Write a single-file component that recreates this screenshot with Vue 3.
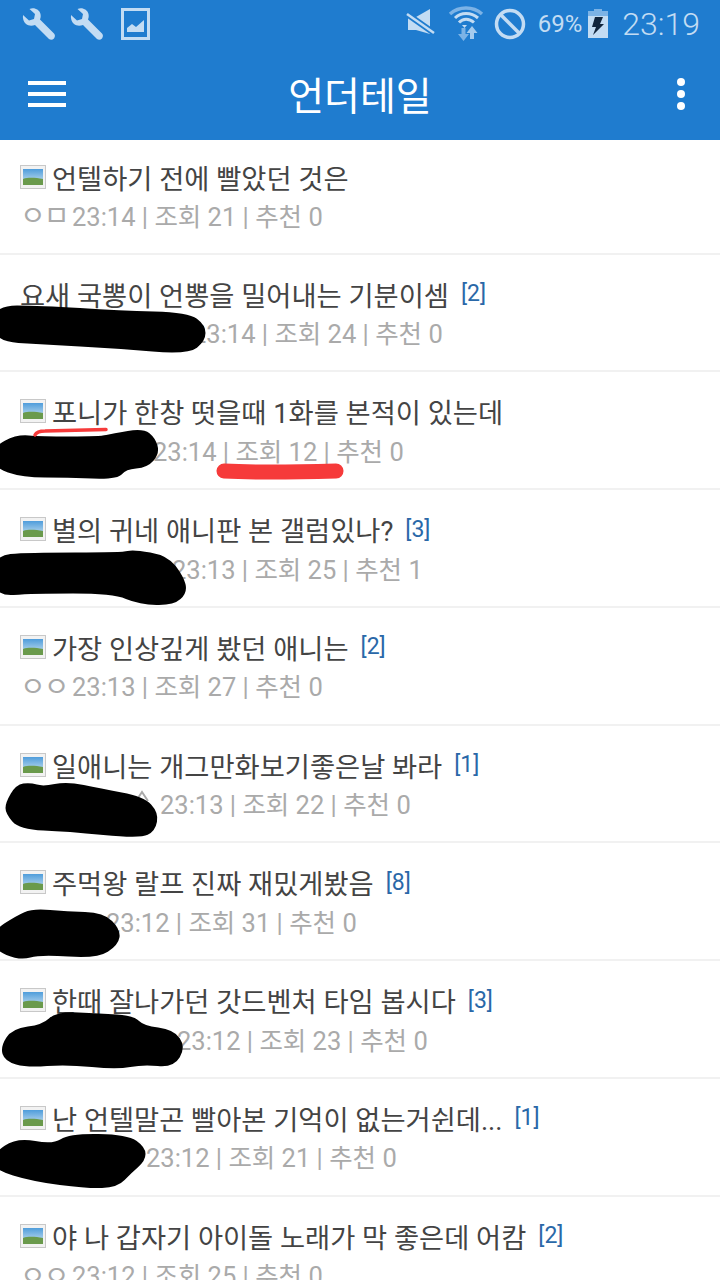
<template>
  <div class="page">
    <div class="statusbar">
      <div class="status-left">
        <svg v-for="n in 2" :key="n" viewBox="0 0 36 36" width="36" height="36">
          <path d="M3 9 L9 14.5 L14 13 L15 8 L9.5 3 C14 1 19.5 3.5 20.5 8 C21 10.5 20.5 12 20 13.5 L34 27.5 C35.5 29 35 31 34 32.5 C32.5 34 30.5 34 29 33 L15 19 C12 20 8.5 20 6 18 C3.5 16 2.5 12.5 3 9 Z" fill="#c3dcf3" />
        </svg>
        <svg class="picture" viewBox="0 0 30 32" width="30" height="32">
          <rect x="2.5" y="1.5" width="26" height="29" fill="none" stroke="#c3dcf3" stroke-width="3" />
          <path d="M7 24 V20 L12 16 L16 19 L24 12 V24 Z" fill="#c3dcf3" />
        </svg>
      </div>
      <div class="status-right">
        <svg viewBox="0 0 32 32" width="32" height="32">
          <path d="M3 9 H11 L25 1 V26 L11 22 H3 Z" fill="#c3dcf3" />
          <path d="M2 6 L29 25" stroke="#1f7ccf" stroke-width="6" />
          <path d="M2 6 L29 25" stroke="#c3dcf3" stroke-width="2.5" />
        </svg>
        <svg class="wifi" viewBox="0 0 36 36" width="36" height="36">
          <path d="M2 8 C11 0 25 0 34 8" fill="none" stroke="#7cb3e6" stroke-width="3.5" />
          <path d="M7 12 C13 6 23 6 30 12" fill="none" stroke="#c3dcf3" stroke-width="3" />
          <path d="M11 16.5 C15 12 21 12 26 16.5" fill="none" stroke="#c3dcf3" stroke-width="3" />
          <path d="M14 19 H19 L16.5 22 Z" fill="#c3dcf3" />
          <path d="M13.5 22 h4 v6 h3.5 l-5.5 7 l-5.5 -7 h3.5 z" fill="#7cb3e6" />
          <path d="M22 33 h4 v-6 h3.5 l-5.5 -7 l-5.5 7 h3.5 z" fill="#a5cbee" />
        </svg>
        <svg viewBox="0 0 32 32" width="32" height="32">
          <circle cx="16" cy="16" r="13.5" fill="none" stroke="#c3dcf3" stroke-width="3.5" />
          <path d="M6.5 6.5 L25.5 25.5" stroke="#c3dcf3" stroke-width="3.5" />
        </svg>
        <span class="battery-text">69%</span>
        <svg class="battery" viewBox="0 0 20 30" width="20" height="30">
          <rect x="6" y="0" width="8" height="2" fill="#7cb3e6" />
          <rect x="0" y="2" width="20" height="5" fill="#7cb3e6" />
          <rect x="0" y="7" width="20" height="22" fill="#c3dcf3" />
          <path d="M7 8 H15 L12 15 H16 L5 26 L8 18 H4 Z" fill="#11253d" />
        </svg>
        <span class="clock">23:19</span>
      </div>
    </div>

    <header class="appbar">
      <div class="hamburger"><i></i><i></i><i></i></div>
      <h1>언더테일</h1>
      <div class="dots"><i></i><i></i><i></i></div>
    </header>

    <ul class="list">
      <li v-for="item in items" :key="item.title" class="row">
        <div class="title">
          <svg v-if="item.image" class="thumb" viewBox="0 0 26 24" width="26" height="24">
            <defs>
              <linearGradient id="sky" x1="0" y1="0" x2="0" y2="1">
                <stop offset="0" stop-color="#4f9ddb" />
                <stop offset="1" stop-color="#d2e6f2" />
              </linearGradient>
            </defs>
            <rect x="0.5" y="0.5" width="25" height="23" fill="#f2f2f2" stroke="#c8c8c8" />
            <rect x="3" y="4" width="20" height="16" fill="url(#sky)" />
            <path d="M3 14 C9 12 16 13 23 14 V20 H3 Z" fill="#6a9a4c" />
          </svg>
          <span>{{ item.title }}</span>
          <span v-if="item.count" class="count">[{{ item.count }}]</span>
        </div>
        <div class="meta">
          <span class="nick" :style="{ width: item.nickWidth + 'px' }">{{ item.nick }}</span>
          <span>{{ item.time }} | 조회 {{ item.views }} | 추천 {{ item.likes }}</span>
        </div>
      </li>
    </ul>

    <svg class="scribbles" viewBox="0 0 720 1280" width="720" height="1280">
      <path d="M136 801 L142 792 L148 801" fill="none" stroke="#aaa" stroke-width="2" />
      <path v-for="(blob, i) in blobs" :key="i" :d="smooth(blob)" fill="#000" stroke="#000" stroke-width="3" stroke-linejoin="round" />
      <g fill="none" stroke="#f63a3a" stroke-linecap="round">
        <path d="M35 435 Q37 431 45 431 L106 429.5" stroke-width="3.5" />
        <path d="M224 471 C260 473 300 472 336 471" stroke-width="15" />
      </g>
    </svg>
  </div>
</template>

<script setup>
const items = [
  { title: "언텔하기 전에 빨았던 것은", image: true, nick: "ㅇㅁ", nickWidth: 52, time: "23:14", views: 21, likes: 0 },
  { title: "요새 국뽕이 언뽕을 밀어내는 기분이셈", count: 2, nick: "", nickWidth: 172, time: "23:14", views: 24, likes: 0 },
  { title: "포니가 한창 떳을때 1화를 본적이 있는데", image: true, nick: "", nickWidth: 133, time: "23:14", views: 12, likes: 0 },
  { title: "별의 귀네 애니판 본 갤럼있나?", image: true, count: 3, nick: "", nickWidth: 152, time: "23:13", views: 25, likes: 1 },
  { title: "가장 인상깊게 봤던 애니는", image: true, count: 2, nick: "ㅇㅇ", nickWidth: 52, time: "23:13", views: 27, likes: 0 },
  { title: "일애니는 개그만화보기좋은날 봐라", image: true, count: 1, nick: "", nickWidth: 140, time: "23:13", views: 22, likes: 0 },
  { title: "주먹왕 랄프 진짜 재밌게봤음", image: true, count: 8, nick: "", nickWidth: 86, time: "23:12", views: 31, likes: 0 },
  { title: "한때 잘나가던 갓드벤처 타임 봅시다", image: true, count: 3, nick: "", nickWidth: 157, time: "23:12", views: 23, likes: 0 },
  { title: "난 언텔말곤 빨아본 기억이 없는거쉰데...", image: true, count: 1, nick: "", nickWidth: 126, time: "23:12", views: 21, likes: 0 },
  { title: "야 나 갑자기 아이돌 노래가 막 좋은데 어캄", image: true, count: 2, nick: "ㅇㅇ", nickWidth: 52, time: "23:12", views: 25, likes: 0 },
];

// 닉네임 가린 낙서 외곽선
const blobs = [
  [[-6, 307], [40, 307], [120, 312], [188, 314], [204, 326], [204, 340], [188, 353], [117, 347], [43, 343], [-6, 340]],
  [[-6, 448], [17, 436], [40, 438], [100, 438], [113, 435], [143, 430], [154, 439], [158, 453], [147, 466], [125, 468], [117, 478], [67, 476], [23, 476], [-6, 466]],
  [[-6, 557], [27, 554], [123, 554], [133, 551], [167, 557], [182, 577], [186, 592], [173, 604], [140, 603], [113, 592], [33, 592], [-6, 595]],
  [[7, 803], [17, 786], [30, 784], [43, 788], [67, 783], [100, 790], [143, 798], [157, 813], [154, 830], [140, 837], [67, 830], [20, 828], [7, 813]],
  [[-6, 932], [17, 917], [33, 910], [67, 913], [103, 914], [119, 930], [117, 944], [97, 957], [40, 953], [20, 959], [-6, 948]],
  [[2, 1047], [13, 1030], [43, 1026], [57, 1013], [100, 1015], [133, 1017], [143, 1027], [173, 1031], [184, 1047], [173, 1066], [143, 1063], [117, 1068], [67, 1063], [27, 1066], [6, 1060]],
  [[-6, 1155], [17, 1139], [53, 1146], [70, 1135], [127, 1136], [144, 1148], [144, 1160], [130, 1172], [117, 1186], [87, 1187], [33, 1180], [-6, 1168]],
];

// 점들을 이어 둥근 닫힌 곡선으로
const smooth = (pts) => {
  const mid = (a, b) => [(a[0] + b[0]) / 2, (a[1] + b[1]) / 2];
  const start = mid(pts[pts.length - 1], pts[0]);
  let d = `M${start[0]} ${start[1]}`;
  pts.forEach((p, i) => {
    const m = mid(p, pts[(i + 1) % pts.length]);
    d += ` Q${p[0]} ${p[1]} ${m[0]} ${m[1]}`;
  });
  return d + " Z";
};
</script>

<style scoped>
.page {
  position: relative;
  width: 720px;
  height: 1280px;
  overflow: hidden;
  background: #fff;
  font-family: Roboto, "Noto Sans CJK KR", sans-serif;
}

.statusbar {
  display: flex;
  justify-content: space-between;
  align-items: center;
  height: 56px;
  padding: 0 20px 8px 20px;
  box-sizing: border-box;
  background: #1f7ccf;
  color: #c3dcf3;
}

.status-left,
.status-right {
  display: flex;
  align-items: center;
}

.status-left {
  gap: 12px;
}

.picture {
  margin-left: 4px;
}

.status-right {
  gap: 10px;
}

.wifi {
  margin-left: 1px;
}

.battery-text {
  font-size: 24px;
  margin-left: 2px;
  margin-right: -4px;
}

.clock {
  font-size: 32px;
  font-weight: 300;
  margin-left: 4px;
}

.appbar {
  display: grid;
  grid-template-columns: 1fr auto 1fr;
  align-items: center;
  height: 84px;
  padding: 0 35px 8px 28px;
  box-sizing: border-box;
  background: #1f7ccf;
  color: #fff;
}

.appbar h1 {
  margin: -2px 0 0 7px;
  font-size: 39px;
  font-weight: 400;
  font-family: "Noto Sans CJK KR", sans-serif;
}

.hamburger {
  display: flex;
  flex-direction: column;
  gap: 7px;
  width: 38px;
}

.hamburger i {
  display: block;
  height: 4px;
  background: #fff;
}

.dots {
  display: flex;
  flex-direction: column;
  gap: 4px;
  justify-self: end;
}

.dots i {
  display: block;
  width: 8px;
  height: 8px;
  border-radius: 50%;
  background: #fff;
}

.list {
  list-style: none;
  margin: 0;
  padding: 0;
}

.row {
  height: 117.75px;
  box-sizing: border-box;
  padding: 20px 20px 0;
  border-bottom: 2px solid #f1f1f1;
}

.row:first-child {
  height: 114.5px;
  padding-top: 18px;
}

.row:first-child .meta {
  margin-top: -2px;
}

.title {
  display: flex;
  align-items: center;
  height: 38px;
  font-size: 27.3px;
  color: #444;
  white-space: nowrap;
}

.thumb {
  margin-right: 6px;
  flex: none;
}

.count {
  margin-left: 12px;
  color: #2a68a8;
  font-size: 23px;
}

.meta {
  display: flex;
  align-items: center;
  margin-top: -1px;
  height: 40px;
  font-size: 25.5px;
  color: #aaa;
  white-space: nowrap;
}

.nick {
  flex: none;
  font-size: 28px;
  letter-spacing: -2px;
}

.scribbles {
  position: absolute;
  top: 0;
  left: 0;
  pointer-events: none;
}
</style>
